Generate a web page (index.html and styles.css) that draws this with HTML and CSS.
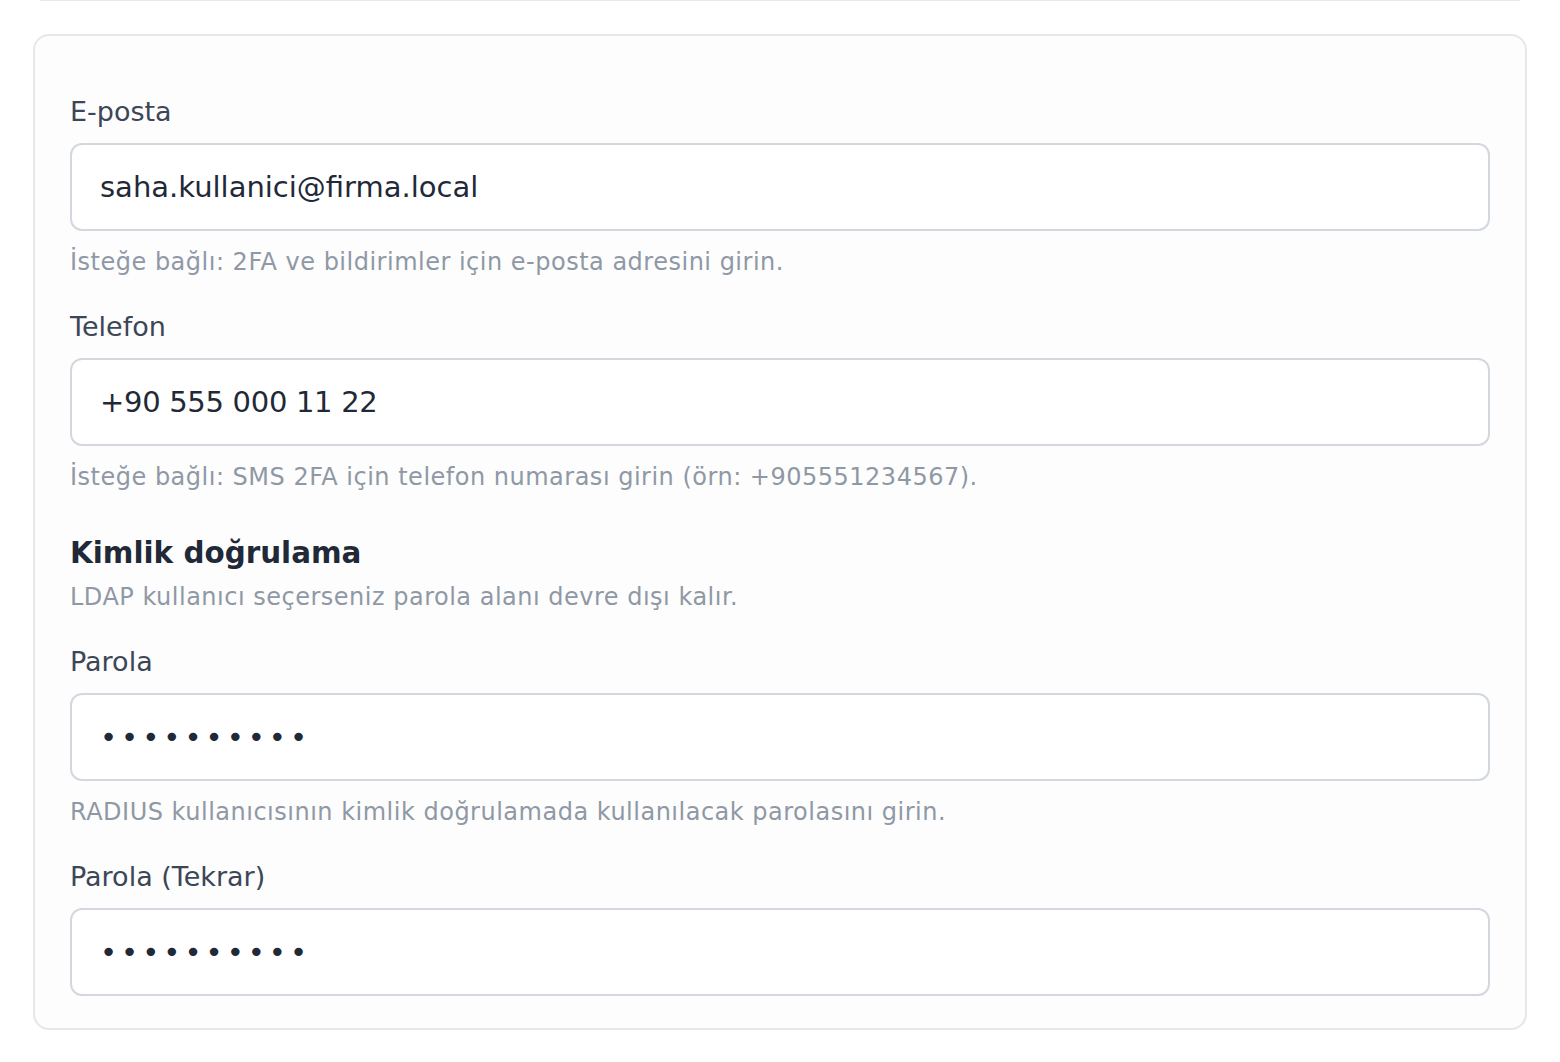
FILE: index.html
```html
<!DOCTYPE html>
<html lang="tr">
<head>
  <meta charset="UTF-8" />
  <meta name="viewport" content="width=device-width, initial-scale=1.0"/>
  <title>Kullanıcı Düzenle</title>
  <link rel="stylesheet" href="styles.css">
</head>
<body>
  <div class="divider"></div>

  <form class="card" autocomplete="off">
    <!-- Contact -->
    <div class="field">
      <label for="email">E-posta</label>
      <input type="email" id="email" value="saha.kullanici@firma.local" />
      <p class="help">İsteğe bağlı: 2FA ve bildirimler için e-posta adresini girin.</p>
    </div>

    <div class="field">
      <label for="phone">Telefon</label>
      <input type="text" id="phone" class="tel" value="+90 555 000 11 22" />
      <p class="help">İsteğe bağlı: SMS 2FA için telefon numarası girin (örn: +905551234567).</p>
    </div>

    <!-- Authentication -->
    <div class="section">
      <h3>Kimlik doğrulama</h3>
      <p class="section-desc">LDAP kullanıcı seçerseniz parola alanı devre dışı kalır.</p>
    </div>

    <div class="field">
      <label for="password">Parola</label>
      <input type="password" id="password" value="radius2024" />
      <p class="help">RADIUS kullanıcısının kimlik doğrulamada kullanılacak parolasını girin.</p>
    </div>

    <div class="field last">
      <label for="password2">Parola (Tekrar)</label>
      <input type="password" id="password2" value="radius2024" />
    </div>
  </form>
</body>
</html>
```

FILE: styles.css
```css
body {
  font-family: 'DejaVu Sans', 'Noto Sans', sans-serif;
  background: #fff;
  margin: 0;
}

.divider {
  margin: -1px 40px 0;
  border-top: 2px solid #e8eaee;
}

.card {
  margin: 33px 33px 0;
  padding: 57px 35px 32px;
  background: #fdfdfd;
  border: 2px solid #e5e7eb;
  border-radius: 16px;
}

.field {
  margin-bottom: 28px;
}

.field.last {
  margin-bottom: 0;
}

.field label {
  display: block;
  font-size: 27px;
  line-height: 38px;
  color: #3c4656;
  margin-bottom: 12px;
}

input {
  display: block;
  width: 100%;
  box-sizing: border-box;
  height: 88px;
  padding: 0 28px;
  border: 2px solid #d3d7de;
  border-radius: 12px;
  background: #fff;
  font-family: inherit;
  font-size: 29px;
  color: #1f2937;
  outline: none;
}

input.tel {
  letter-spacing: -0.3px;
}

input[type="password"] {
  letter-spacing: 4px;
}

.help {
  margin: 13px 0 0;
  font-size: 24px;
  line-height: 36px;
  letter-spacing: 0.5px;
  color: #8f98a5;
}

.section {
  margin-top: 38px;
  margin-bottom: 28px;
}

.section h3 {
  margin: 0 0 6px;
  font-size: 29.4px;
  line-height: 40px;
  font-weight: bold;
  color: #1f2937;
}

.section-desc {
  margin: 0;
  font-size: 24px;
  line-height: 36px;
  letter-spacing: 0.5px;
  color: #8f98a5;
}
```
